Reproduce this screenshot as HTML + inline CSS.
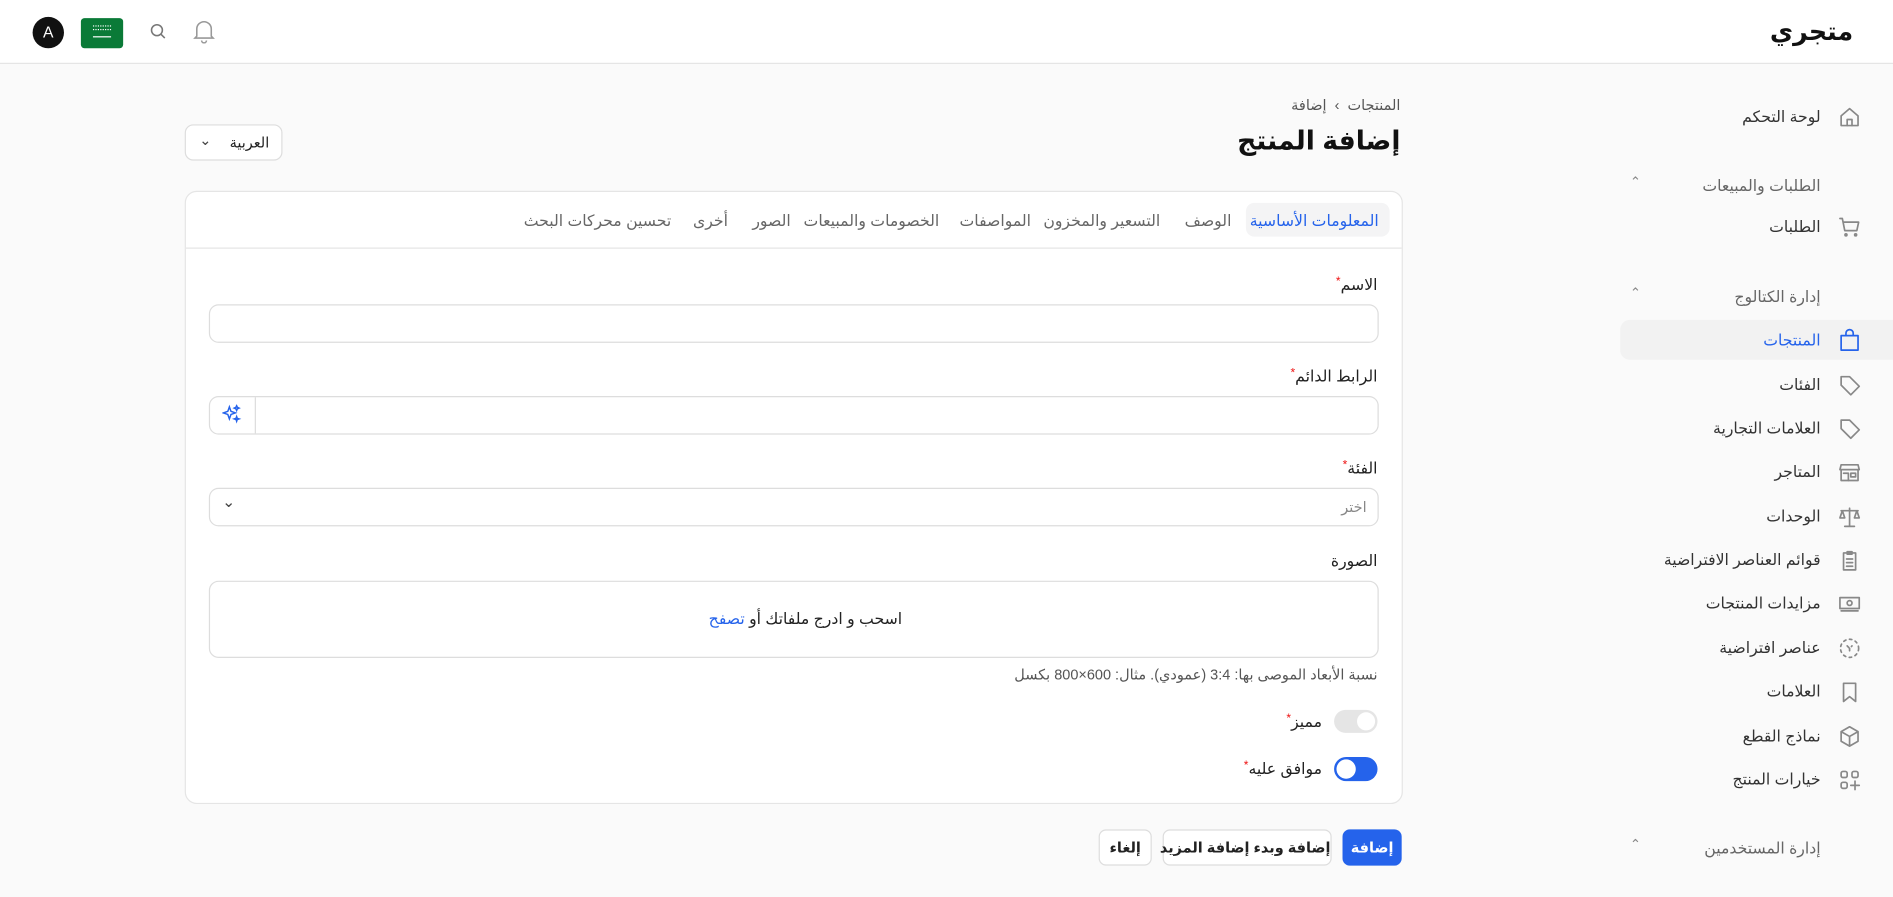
<!DOCTYPE html>
<html><head><meta charset="utf-8"><style>
*{box-sizing:border-box;margin:0;padding:0}
body{width:1893px;height:897px;background:#fafafa;font-family:"Liberation Sans","DejaVu Sans",sans-serif;position:relative;overflow:hidden;color:#222}
#w{position:absolute;left:0;top:0;width:1568px;height:743px;transform:scale(1.2073);transform-origin:0 0}
.a{position:absolute}
.r{direction:rtl;white-space:nowrap}
.hdr{left:0;top:0;width:1568px;height:53px;background:#fff;border-bottom:1px solid #e5e5e5}
.si{right:60px;font-size:13px;color:#333}
.ic{right:26px;width:20px;height:20px}
.ic svg{width:20px;height:20px;fill:none;stroke:#888;stroke-width:1.4;stroke-linecap:round;stroke-linejoin:round}
.sec{right:60px;font-size:13px;color:#666}
.chev{left:1350px;font-size:11px;color:#888}
.card{left:153px;top:158px;width:1009px;height:508px;background:#fff;border:1px solid #e5e5e5;border-radius:10px}
.tab{top:175px;font-size:13px;color:#666}
.lbl{right:427px;font-size:13px;color:#222}
.lbl b{color:#e11;font-weight:normal;font-size:10px;vertical-align:top}
.inp{left:173px;width:969px;height:32px;border:1px solid #ddd;border-radius:8px;background:#fff}
.btn{top:687px;height:30px;border:1px solid #ddd;border-radius:6px;background:#fff;font-size:12px;font-weight:bold;text-align:center;line-height:28px}
</style></head><body><div id="w">
<div class="a hdr"></div>
<div class="a r" style="right:33px;top:14px;font-size:21px;font-weight:bold;color:#111">متجري</div>
<div class="a" style="left:27px;top:14px;width:26px;height:26px;border-radius:50%;background:#111;color:#fff;font-size:13px;text-align:center;line-height:26px">A</div>
<div class="a" style="left:67px;top:15px;width:35px;height:25px;border-radius:3px;background:#0a7a37"><div class="a" style="left:10px;top:6px;width:15px;height:4px;border-top:1px dotted #fff;border-bottom:1px dotted #fff"></div><div class="a" style="left:10px;top:15px;width:15px;height:1px;background:#fff"></div></div>
<svg class="a" style="left:124px;top:19px" width="14" height="14" viewBox="0 0 14 14" fill="none" stroke="#777" stroke-width="1.3"><circle cx="6" cy="6" r="4.5"/><path d="M9.3 9.3L12.5 12.5"/></svg>
<svg class="a" style="left:160px;top:16px" width="18" height="20" viewBox="0 0 18 20" fill="none" stroke="#999" stroke-width="1.3"><path d="M3 14V8a6 6 0 0112 0v6l1.5 1.5h-15z"/><path d="M7 17.5a2 2 0 004 0"/></svg>

<div class="a ic" style="top:87px"><svg viewBox="0 0 20 20"><path d="M3 9l7-6 7 6v8H3z"/><path d="M8 17v-5h4v5"/></svg></div>
<div class="a r si" style="top:89px">لوحة التحكم</div>
<div class="a r sec" style="top:146px">الطلبات والمبيعات</div><div class="a chev" style="top:144px">&#8963;</div>
<div class="a ic" style="top:178px"><svg viewBox="0 0 20 20"><path d="M2 3h2l2 10h10l1.5-7H5"/><circle cx="7" cy="16.5" r=".8"/><circle cx="15" cy="16.5" r=".8"/></svg></div>
<div class="a r si" style="top:180px">الطلبات</div>
<div class="a r sec" style="top:238px">إدارة الكتالوج</div><div class="a chev" style="top:236px">&#8963;</div>
<div class="a" style="left:1342px;top:265px;width:524px;height:33px;background:#f2f2f2;border-radius:8px"></div>
<div class="a ic" style="top:272px"><svg viewBox="0 0 20 20" style="stroke:#2563eb"><path d="M3 6h14v12H3z"/><path d="M7 6V4a3 3 0 016 0v2"/></svg></div>
<div class="a r si" style="top:274px;color:#2563eb">المنتجات</div>
<div class="a ic" style="top:309px"><svg viewBox="0 0 20 20"><path d="M3 3h7l8 8-7 7-8-8z"/></svg></div>
<div class="a r si" style="top:311px">الفئات</div>
<div class="a ic" style="top:345px"><svg viewBox="0 0 20 20"><path d="M3 3h7l8 8-7 7-8-8z"/></svg></div>
<div class="a r si" style="top:347px">العلامات التجارية</div>
<div class="a ic" style="top:381px"><svg viewBox="0 0 20 20"><path d="M3 4h14l1 4H2zM3 8v9h14V8"/><path d="M5 11h4v6M11 11h4v3h-4z"/></svg></div>
<div class="a r si" style="top:383px">المتاجر</div>
<div class="a ic" style="top:418px"><svg viewBox="0 0 20 20"><path d="M10 3v15M3 5h14M6 18h8M4 5l-2 6h4zM16 5l-2 6h4z"/></svg></div>
<div class="a r si" style="top:420px">الوحدات</div>
<div class="a ic" style="top:454px"><svg viewBox="0 0 20 20"><path d="M5 4h10v14H5zM8 3h4v2H8zM7.5 9h5M7.5 12h5M7.5 15h5"/></svg></div>
<div class="a r si" style="top:456px">قوائم العناصر الافتراضية</div>
<div class="a ic" style="top:490px"><svg viewBox="0 0 20 20"><path d="M2 5h16v9H2zM3 16h14"/><circle cx="10" cy="9.5" r="2"/></svg></div>
<div class="a r si" style="top:492px">مزايدات المنتجات</div>
<div class="a ic" style="top:527px"><svg viewBox="0 0 20 20" stroke-dasharray="2 3"><circle cx="10" cy="10" r="7.5"/><path d="M8 8l2 2 2-2M10 10v3"/></svg></div>
<div class="a r si" style="top:529px">عناصر افتراضية</div>
<div class="a ic" style="top:563px"><svg viewBox="0 0 20 20"><path d="M5 3h10v15l-5-4-5 4z"/></svg></div>
<div class="a r si" style="top:565px">العلامات</div>
<div class="a ic" style="top:600px"><svg viewBox="0 0 20 20"><path d="M10 2l7 4v8l-7 4-7-4V6zM3 6l7 4 7-4M10 10v8"/></svg></div>
<div class="a r si" style="top:602px">نماذج القطع</div>
<div class="a ic" style="top:636px"><svg viewBox="0 0 20 20"><rect x="3" y="3" width="5" height="5" rx="1.5"/><rect x="12" y="3" width="5" height="5" rx="1.5"/><rect x="3" y="12" width="5" height="5" rx="1.5"/><path d="M14.5 11v7M11 14.5h7"/></svg></div>
<div class="a r si" style="top:638px">خيارات المنتج</div>
<div class="a r sec" style="top:695px">إدارة المستخدمين</div><div class="a chev" style="top:693px">&#8963;</div>

<div class="a r" style="right:408px;top:80px;font-size:12px;color:#555">المنتجات &nbsp;&#8250;&nbsp; إضافة</div>
<div class="a r" style="right:408px;top:104px;font-size:22px;font-weight:bold;color:#111">إضافة المنتج</div>
<div class="a" style="left:153px;top:103px;width:81px;height:30px;border:1px solid #ddd;border-radius:7px;background:#fff"><span class="a r" style="right:10px;top:7px;font-size:12px">العربية</span><span class="a" style="left:11px;top:5px;font-size:12px;color:#444">&#8964;</span></div>

<div class="a card"></div>
<div class="a" style="left:154px;top:205px;width:1007px;height:1px;background:#e5e5e5"></div>
<div class="a" style="left:1032px;top:168px;width:119px;height:28px;background:#f4f4f5;border-radius:7px"></div>
<div class="a r tab" style="right:426px;color:#2563eb">المعلومات الأساسية</div>
<div class="a r tab" style="right:548px">الوصف</div>
<div class="a r tab" style="right:607px">التسعير والمخزون</div>
<div class="a r tab" style="right:714px">المواصفات</div>
<div class="a r tab" style="right:790px">الخصومات والمبيعات</div>
<div class="a r tab" style="right:913px">الصور</div>
<div class="a r tab" style="right:965px">أخرى</div>
<div class="a r tab" style="right:1012px">تحسين محركات البحث</div>

<div class="a r lbl" style="top:228px">الاسم<b>*</b></div>
<div class="a inp" style="top:252px"></div>
<div class="a r lbl" style="top:304px">الرابط الدائم<b>*</b></div>
<div class="a inp" style="top:328px"></div>
<div class="a" style="left:211px;top:329px;width:1px;height:30px;background:#ddd"></div>
<svg class="a" style="left:184px;top:335px" width="16" height="16" viewBox="0 0 16 16" fill="none" stroke="#2563eb" stroke-width="1.2"><path d="M6 2l1.3 3.7L11 7 7.3 8.3 6 12 4.7 8.3 1 7l3.7-1.3zM12 1l.6 1.4L14 3l-1.4.6L12 5l-.6-1.4L10 3l1.4-.6zM12 10l.5 1.5L14 12l-1.5.5L12 14l-.5-1.5L10 12l1.5-.5z"/></svg>
<div class="a r lbl" style="top:380px">الفئة<b>*</b></div>
<div class="a inp" style="top:404px"></div>
<div class="a r" style="right:436px;top:413px;font-size:12px;color:#888">اختر</div>
<div class="a" style="left:184px;top:408px;font-size:13px;color:#444">&#8964;</div>
<div class="a r lbl" style="top:457px">الصورة</div>
<div class="a" style="left:173px;top:481px;width:969px;height:64px;border:1px solid #ddd;border-radius:8px;background:#fff"></div>
<div class="a r" style="left:587px;top:505px;font-size:13px;direction:rtl">اسحب و ادرج ملفاتك أو <span style="color:#2563eb">تصفح</span></div>
<div class="a r" style="right:427px;top:552px;font-size:12px;color:#555">نسبة الأبعاد الموصى بها: 3:4 (عمودي). مثال: 600×800 بكسل</div>

<div class="a" style="left:1105px;top:588px;width:36px;height:19px;border-radius:10px;background:#e5e5e5"><div class="a" style="left:19px;top:2px;width:15px;height:15px;border-radius:50%;background:#fff"></div></div>
<div class="a r lbl" style="right:473px;top:590px">مميز<b>*</b></div>
<div class="a" style="left:1105px;top:627px;width:36px;height:20px;border-radius:10px;background:#2563eb"><div class="a" style="left:2px;top:2px;width:16px;height:16px;border-radius:50%;background:#fff"></div></div>
<div class="a r lbl" style="right:473px;top:629px">موافق عليه<b>*</b></div>

<div class="a btn r" style="left:1112px;width:49px;background:#2563eb;border-color:#2563eb;color:#fff">إضافة</div>
<div class="a btn r" style="left:963px;width:140px">إضافة وبدء إضافة المزيد</div>
<div class="a btn r" style="left:910px;width:44px">إلغاء</div>
</div></body></html>
